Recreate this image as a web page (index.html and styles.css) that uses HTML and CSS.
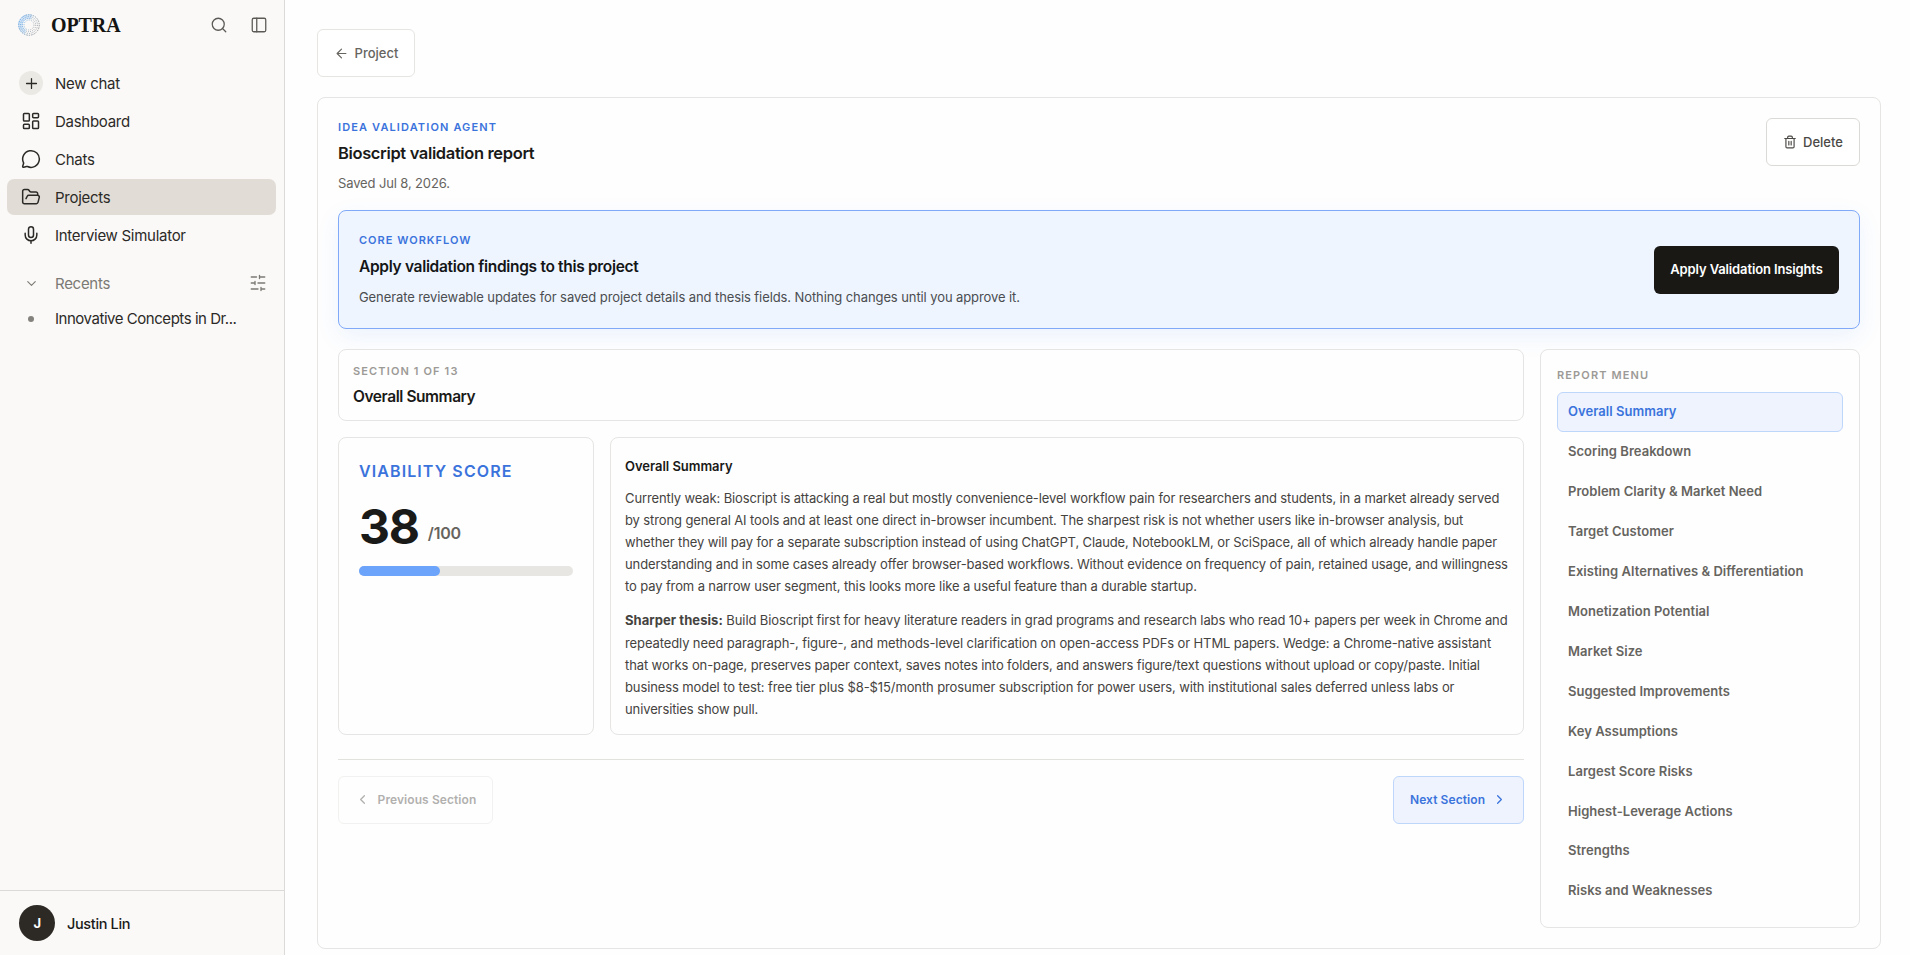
FILE: index.html
```html
<!DOCTYPE html>
<html lang="en">
<head>
<meta charset="utf-8">
<title>Optra – Bioscript validation report</title>
<link rel="stylesheet" href="styles.css">
</head>
<body>
<div class="app">
  <aside class="sidebar">
    <div class="brand">
      <svg class="logo" viewBox="0 0 24 24" fill="none">
        <defs>
          <linearGradient id="ring" x1="0" y1="0.2" x2="1" y2="0.7">
            <stop offset="0" stop-color="#4f9be6"/>
            <stop offset="0.45" stop-color="#7f9db8"/>
            <stop offset="1" stop-color="#8f9296"/>
          </linearGradient>
        </defs>
        <path d="M15 3.6A8.8 8.8 0 0 0 8 19.8" stroke="#a9d0f5" stroke-width="5" opacity="0.5"/>
        <g stroke="url(#ring)">
          <circle cx="12" cy="12" r="11.2" stroke-width="1" stroke-dasharray="1.6 1.1"/>
          <circle cx="12" cy="12" r="9.2" stroke-width=".9" stroke-dasharray="1.2 1.4"/>
          <circle cx="12" cy="12" r="7.3" stroke-width=".9" stroke-dasharray="1 1.3"/>
          <circle cx="12" cy="12" r="5.4" stroke-width=".8" stroke-dasharray=".9 1.2"/>
        </g>
      </svg>
      <span class="brand-name">OPTRA</span>
      <svg class="icon tool search" viewBox="0 0 24 24"><circle cx="11" cy="11" r="8"/><path d="m21 21-4.3-4.3"/></svg>
      <svg class="icon tool panel" viewBox="0 0 24 24"><rect x="3" y="3" width="18" height="18" rx="2"/><path d="M9 3v18"/></svg>
    </div>
    <nav class="nav">
      <a class="nav-item"><span class="slot plus"><svg class="icon" viewBox="0 0 24 24"><path d="M5 12h14M12 5v14"/></svg></span>New chat</a>
      <a class="nav-item"><span class="slot"><svg class="icon" viewBox="0 0 24 24"><rect x="3" y="3" width="7" height="9" rx="1"/><rect x="14" y="3" width="7" height="5" rx="1"/><rect x="14" y="12" width="7" height="9" rx="1"/><rect x="3" y="16" width="7" height="5" rx="1"/></svg></span>Dashboard</a>
      <a class="nav-item"><span class="slot"><svg class="icon" viewBox="0 0 24 24"><path d="M2.992 16.342a2 2 0 0 1 .094 1.167l-1.065 3.29a1 1 0 0 0 1.236 1.168l3.413-.998a2 2 0 0 1 1.099.092 10 10 0 1 0-4.777-4.719"/></svg></span>Chats</a>
      <a class="nav-item active"><span class="slot"><svg class="icon" viewBox="0 0 24 24"><path d="m6 14 1.5-2.9A2 2 0 0 1 9.24 10H20a2 2 0 0 1 1.94 2.5l-1.54 6a2 2 0 0 1-1.95 1.5H4a2 2 0 0 1-2-2V5a2 2 0 0 1 2-2h3.9a2 2 0 0 1 1.69.9l.81 1.2a2 2 0 0 0 1.67.9H18a2 2 0 0 1 2 2v2"/></svg></span>Projects</a>
      <a class="nav-item"><span class="slot"><svg class="icon" viewBox="0 0 24 24"><path d="M12 19v3M19 10v2a7 7 0 0 1-14 0v-2"/><rect x="9" y="2" width="6" height="13" rx="3"/></svg></span>Interview Simulator</a>
    </nav>
    <div class="recents">
      <span class="slot"><svg class="icon chevron" viewBox="0 0 24 24"><path d="m6 9 6 6 6-6"/></svg></span>
      <span class="recents-title">Recents</span>
      <svg class="icon filter" viewBox="0 0 24 24"><path d="M21 4h-7M10 4H3M21 12h-9M8 12H3M21 20h-5M12 20H3M14 2v4M8 10v4M16 18v4"/></svg>
    </div>
    <a class="recent"><span class="slot"><i class="dot"></i></span>Innovative Concepts in Dr...</a>
    <div class="user"><span class="avatar">J</span>Justin Lin</div>
  </aside>

  <main class="main">
    <button class="btn back"><svg class="icon" viewBox="0 0 24 24"><path d="m12 19-7-7 7-7M19 12H5"/></svg>Project</button>
    <section class="report">
      <header class="report-head">
        <div>
          <p class="eyebrow blue agent">Idea Validation Agent</p>
          <h1 class="report-title">Bioscript validation report</h1>
          <p class="saved">Saved Jul 8, 2026.</p>
        </div>
        <button class="btn delete"><svg class="icon" viewBox="0 0 24 24"><path d="M3 6h18M19 6v14a2 2 0 0 1-2 2H7a2 2 0 0 1-2-2V6M8 6V4a2 2 0 0 1 2-2h4a2 2 0 0 1 2 2v2M10 11v6M14 11v6"/></svg>Delete</button>
      </header>

      <div class="workflow">
        <div>
          <p class="eyebrow blue">Core Workflow</p>
          <h2 class="workflow-title">Apply validation findings to this project</h2>
          <p class="workflow-text">Generate reviewable updates for saved project details and thesis fields. Nothing changes until you approve it.</p>
        </div>
        <button class="btn apply">Apply Validation Insights</button>
      </div>

      <div class="columns">
        <div class="content">
          <div class="section-head">
            <p class="eyebrow gray">Section 1 of 13</p>
            <h2 class="section-title">Overall Summary</h2>
          </div>
          <div class="cards">
            <div class="score">
              <p class="score-label">VIABILITY SCORE</p>
              <p class="score-value"><b>38</b><span>/100</span></p>
              <div class="bar"><div class="bar-fill" style="width:38%"></div></div>
            </div>
            <article class="summary">
              <h3>Overall Summary</h3>
              <p>Currently weak: Bioscript is attacking a real but mostly convenience-level workflow pain for researchers and students, in a market already served<br>by strong general AI tools and at least one direct in-browser incumbent. The sharpest risk is not whether users like in-browser analysis, but<br>whether they will pay for a separate subscription instead of using ChatGPT, Claude, NotebookLM, or SciSpace, all of which already handle paper<br>understanding and in some cases already offer browser-based workflows. Without evidence on frequency of pain, retained usage, and willingness<br>to pay from a narrow user segment, this looks more like a useful feature than a durable startup.</p>
              <p><strong>Sharper thesis:</strong> Build Bioscript first for heavy literature readers in grad programs and research labs who read 10+ papers per week in Chrome and<br>repeatedly need paragraph-, figure-, and methods-level clarification on open-access PDFs or HTML papers. Wedge: a Chrome-native assistant<br>that works on-page, preserves paper context, saves notes into folders, and answers figure/text questions without upload or copy/paste. Initial<br>business model to test: free tier plus $8-$15/month prosumer subscription for power users, with institutional sales deferred unless labs or<br>universities show pull.</p>
            </article>
          </div>
          <footer class="pager">
            <button class="btn prev"><svg class="icon" viewBox="0 0 24 24"><path d="m15 18-6-6 6-6"/></svg>Previous Section</button>
            <button class="btn next">Next Section<svg class="icon" viewBox="0 0 24 24"><path d="m9 18 6-6-6-6"/></svg></button>
          </footer>
        </div>
        <aside class="menu">
          <p class="eyebrow gray">Report Menu</p>
          <a class="menu-item current">Overall Summary</a>
          <a class="menu-item">Scoring Breakdown</a>
          <a class="menu-item">Problem Clarity &amp; Market Need</a>
          <a class="menu-item">Target Customer</a>
          <a class="menu-item">Existing Alternatives &amp; Differentiation</a>
          <a class="menu-item">Monetization Potential</a>
          <a class="menu-item">Market Size</a>
          <a class="menu-item">Suggested Improvements</a>
          <a class="menu-item">Key Assumptions</a>
          <a class="menu-item">Largest Score Risks</a>
          <a class="menu-item">Highest-Leverage Actions</a>
          <a class="menu-item">Strengths</a>
          <a class="menu-item">Risks and Weaknesses</a>
        </aside>
      </div>
    </section>
  </main>
</div>
</body>
</html>
```

FILE: styles.css
```css
* { box-sizing: border-box; margin: 0; }

body {
  font-family: Inter, "Liberation Sans", sans-serif;
  background: #fefefe;
  color: #1a1a18;
}

.app { display: flex; height: 955px; overflow: hidden; }

.icon {
  fill: none;
  stroke: currentColor;
  stroke-width: 2;
  stroke-linecap: round;
  stroke-linejoin: round;
  flex: none;
}

/* Sidebar */
.sidebar {
  width: 285px;
  flex: none;
  display: flex;
  flex-direction: column;
  background: #faf9f7;
  border-right: 1px solid #dbdad8;
  font-size: 15px;
  letter-spacing: -0.28px;
  color: #2c2a27;
}
.brand { display: flex; align-items: center; height: 50px; padding: 0 16px 0 18px; }
.logo { width: 22px; height: 22px; }
.brand-name {
  margin-left: 11px;
  font: 700 20px "Liberation Serif", serif;
  letter-spacing: -0.1px;
  color: #141412;
}
.tool { width: 18px; height: 18px; stroke-width: 1.7; color: #5c5a56; }
.search { margin: 0 22px 0 auto; }
.nav { display: flex; flex-direction: column; gap: 2px; padding: 15px 8px 0 7px; }
.nav-item { display: flex; align-items: center; gap: 12px; height: 36px; padding-left: 12px; border-radius: 7px; }
.nav-item.active { background: #e1ddd6; }
.slot { width: 24px; height: 24px; flex: none; display: grid; place-items: center; }
.slot .icon { width: 20px; height: 20px; stroke-width: 1.8; }
.plus { border-radius: 50%; background: #ebe9e4; }
.plus .icon { width: 17px; height: 17px; }
.recents { display: flex; align-items: center; gap: 12px; height: 36px; margin-top: 12px; padding: 0 17px 0 19px; color: #7c7a75; }
.slot .chevron { width: 15px; height: 15px; }
.filter { width: 18px; height: 18px; margin-left: auto; stroke-width: 1.8; }
.recent { display: flex; align-items: center; gap: 12px; height: 35px; padding-left: 19px; letter-spacing: -0.46px; }
.dot { width: 6px; height: 6px; border-radius: 50%; background: #84827d; }
.user {
  display: flex;
  align-items: center;
  gap: 12px;
  height: 65px;
  margin-top: auto;
  padding-left: 19px;
  border-top: 1px solid #dbdad8;
  font-weight: 500;
  font-size: 14.5px;
  letter-spacing: -0.35px;
  color: #1a1a18;
}
.avatar { width: 36px; height: 36px; border-radius: 50%; background: #2d2a26; color: #fff; display: grid; place-items: center; font-size: 13px; font-weight: 700; }

/* Shared controls */
.btn {
  display: flex;
  align-items: center;
  justify-content: center;
  height: 48px;
  padding: 0;
  border: 1px solid #e6e5e2;
  border-radius: 6px;
  background: #fff;
  font: 500 13px Inter, sans-serif;
  white-space: nowrap;
  flex: none;
}
.eyebrow { font-size: 11px; font-weight: 600; line-height: 16px; letter-spacing: 1.13px; text-transform: uppercase; }
.blue { color: #3b73dc; }
.gray { color: #9c9a96; }

/* Main */
.main { flex: 1; padding: 29px 29px 0 32px; }
.back { width: 98px; gap: 6px; color: #66645f; }
.back .icon { width: 15px; height: 15px; stroke-width: 1.9; }
.report { height: 852px; margin-top: 20px; padding: 20px; border: 1px solid #e6e5e3; border-radius: 8px; }
.report-head { display: flex; justify-content: space-between; height: 92px; }
.agent { margin-top: 1px; }
.report-title { margin-top: 6px; font-size: 16.5px; line-height: 24px; font-weight: 600; letter-spacing: -0.36px; }
.saved { margin-top: 8px; font-size: 13px; line-height: 20px; letter-spacing: -0.13px; color: #66645f; }
.delete { width: 94px; gap: 6px; color: #4b4945; border-color: #dcdad6; }
.delete .icon { width: 14px; height: 14px; }

.workflow {
  display: flex;
  align-items: center;
  justify-content: space-between;
  height: 119px;
  padding: 0 20px;
  border: 1px solid #80a9f8;
  border-radius: 8px;
  background: #eef5ff;
  box-shadow: 0 8px 24px rgba(59, 130, 246, 0.09);
}
.workflow .eyebrow { letter-spacing: 1px; }
.workflow-title { margin-top: 8px; font-size: 15.5px; line-height: 22px; font-weight: 600; letter-spacing: -0.32px; color: #141517; }
.workflow-text { margin-top: 9px; font-size: 13px; line-height: 21px; letter-spacing: -0.093px; color: #4b4d50; }
.apply { width: 185px; padding-bottom: 1px; border: 0; background: #191815; color: #fff; font-weight: 600; letter-spacing: -0.13px; }

.columns { display: grid; grid-template-columns: 1186px 320px; column-gap: 16px; margin-top: 20px; }
.section-head { height: 72px; padding: 13px 14px; border: 1px solid #e6e5e3; border-radius: 8px; background: #fefefe; }
.section-title { margin-top: 7px; font-size: 15.5px; line-height: 22px; font-weight: 600; letter-spacing: -0.43px; }
.cards { display: grid; grid-template: 298px / 256px 1fr; gap: 16px; margin-top: 16px; }
.score, .summary { border: 1px solid #e6e5e3; border-radius: 8px; background: #fefefe; }
.score { padding: 22px 20px; }
.score-label { font-size: 16px; line-height: 22px; font-weight: 600; letter-spacing: 1.1px; color: #3b73dc; }
.score-value { display: flex; align-items: center; gap: 9px; height: 48px; margin-top: 21px; }
.score-value b { font-size: 48px; line-height: 48px; letter-spacing: -1.2px; }
.score-value span { margin-top: 11px; font-size: 16px; line-height: 20px; font-weight: 600; color: #66645f; letter-spacing: -0.2px; }
.bar { height: 10px; margin-top: 15px; border-radius: 5px; background: #e8e6e3; }
.bar-fill { height: 10px; border-radius: 5px; background: #6ca3fb; }
.summary { padding: 18px 14px 0; white-space: nowrap; }
.summary h3 { font-size: 13px; line-height: 21px; font-weight: 600; letter-spacing: -0.03px; }
.summary p { margin-top: 10px; font-size: 13px; line-height: 22.1px; letter-spacing: -0.118px; color: #454340; }
.summary p + p { margin-top: 12px; letter-spacing: -0.108px; }
.summary strong { font-weight: 700; letter-spacing: 0.06px; }
.pager { display: flex; justify-content: space-between; margin-top: 24px; padding-top: 16px; border-top: 1px solid #e2e1de; }
.pager .btn { padding-bottom: 1px; font-size: 12px; font-weight: 600; letter-spacing: 0.08px; }
.pager .icon { width: 15px; height: 15px; }
.prev { width: 155px; gap: 8px; color: #66645f; opacity: 0.5; }
.next { width: 131px; gap: 7px; color: #3b73dc; border-color: #bfd6fb; background: #eef3fe; }

.menu { height: 579px; padding: 17px 16px; border: 1px solid #e6e5e3; border-radius: 8px; background: #fefefe; }
.menu .eyebrow { margin-bottom: 9px; }
.menu-item { display: flex; align-items: center; height: 39.92px; padding: 0 0 1px 10px; border: 1px solid transparent; border-radius: 6px; font-size: 13px; font-weight: 600; letter-spacing: 0.04px; color: #66645f; }
.menu-item.current { color: #3b73dc; background: #eef3fe; border-color: #bfd6fb; }
```
